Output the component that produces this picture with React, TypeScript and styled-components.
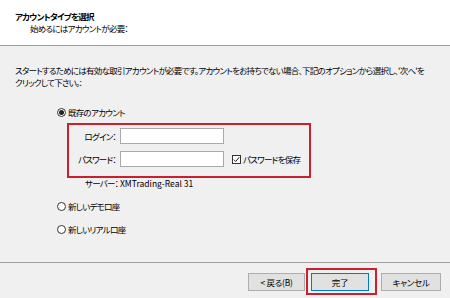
import React from 'react'
import styled, { createGlobalStyle } from 'styled-components'

const GlobalStyle = createGlobalStyle`
  body {
    margin: 0;
    font-family: "Noto Sans CJK JP", "Noto Sans", sans-serif;
    font-feature-settings: "palt";
    color: #000;
  }
`

const Window = styled.div`
  width: 450px;
  height: 298px;
  background: #f0f0f0;
  display: flex;
  flex-direction: column;
  font-size: 8.5px;
  line-height: 12px;
  letter-spacing: -0.75px;
  white-space: nowrap;
`

const Header = styled.div`
  height: 46px;
  box-sizing: border-box;
  background: #fff;
  border-bottom: 1px solid #a0a0a0;
  padding: 10px 0 0 15px;
`

const Title = styled.div`
  font-weight: bold;
`

const Subtitle = styled.div`
  padding-left: 15px;
`

const Body = styled.div`
  flex: 1;
  padding: 0 15px;
`

const Intro = styled.p`
  margin: 18px 0 0;
`

const Options = styled.div`
  margin-top: 18px;
  padding-left: 42px;
  display: flex;
  flex-direction: column;
`

const RadioRow = styled.label<{ $gap?: number }>`
  display: flex;
  align-items: center;
  gap: 2px;
  height: 12px;
  margin-top: ${(p) => p.$gap ?? 0}px;
`

const RadioCircle = styled.span<{ $checked?: boolean }>`
  width: 9px;
  height: 9px;
  box-sizing: border-box;
  border: 1px solid #333;
  border-radius: 50%;
  background: #fff;
  display: flex;
  align-items: center;
  justify-content: center;
  &::after {
    content: '';
    width: 5px;
    height: 5px;
    border-radius: 50%;
    background: ${(p) => (p.$checked ? '#222' : 'transparent')};
  }
`

const Highlight = styled.div`
  margin: 5px 0 0 10px;
  width: 244px;
  height: 55px;
  box-sizing: border-box;
  border: 2px solid #c8202f;
  padding-top: 3px;
  display: grid;
  grid-template-columns: 47px 104px auto;
  grid-auto-rows: 16px;
  column-gap: 4px;
  row-gap: 7px;
  align-items: center;
`

const FieldLabel = styled.span`
  text-align: right;
`

const TextBox = styled.div`
  height: 16px;
  box-sizing: border-box;
  background: #fff;
  border: 1px solid #a9a9a9;
`

const CheckRow = styled.label`
  display: flex;
  align-items: center;
  gap: 2px;
  margin-left: 4px;
`

const CheckBox = styled.span`
  width: 9px;
  height: 9px;
  box-sizing: border-box;
  border: 1px solid #333;
  background: #fff;
  display: flex;
  align-items: center;
  justify-content: center;
`

const ServerRow = styled.div`
  display: flex;
  padding-left: 28px;
  height: 10px;
  line-height: 10px;
`

const ServerLabel = styled.span`
  width: 35px;
`

const ServerName = styled.span`
  letter-spacing: 0;
`

const Footer = styled.div`
  height: 36px;
  box-sizing: border-box;
  border-top: 1px solid #a0a0a0;
  padding: 5px 9px 0 0;
  display: flex;
  justify-content: flex-end;
  align-items: flex-start;
`

const ButtonRow = styled.div`
  display: flex;
  align-items: center;
  height: 27px;
`

const Button = styled.button<{ $width: number; $default?: boolean }>`
  width: ${(p) => p.$width}px;
  height: 18px;
  box-sizing: border-box;
  padding: 0;
  font: inherit;
  font-size: 8.5px;
  letter-spacing: -0.3px;
  color: #000;
  background: #e1e1e1;
  border: 1px solid ${(p) => (p.$default ? '#0078d7' : '#adadad')};
`

const Marked = styled.span`
  display: flex;
  border: 2px solid #c8202f;
  padding: 3px 6px 2px 3px;
  margin: 0 4px 0 1px;
`

const Check = () => (
  <svg width="7" height="7" viewBox="0 0 7 7">
    <path d="M0.8 3.6 L2.7 5.5 L6.3 1.2" fill="none" stroke="#222" strokeWidth="1" />
  </svg>
)

export default function App() {
  return (
    <Window>
      <GlobalStyle />
      <Header>
        <Title>アカウントタイプを選択</Title>
        <Subtitle>始めるにはアカウントが必要：</Subtitle>
      </Header>
      <Body>
        <Intro>
          スタートするためには有効な取引アカウントが必要です。アカウントをお持ちでない場合、下記のオプションから選択し、'次へ'を
          <br />
          クリックして下さい。:
        </Intro>
        <Options>
          <RadioRow>
            <RadioCircle $checked />
            既存のアカウント
          </RadioRow>
          <Highlight>
            <FieldLabel>ログイン：</FieldLabel>
            <TextBox />
            <span />
            <FieldLabel>パスワード：</FieldLabel>
            <TextBox />
            <CheckRow>
              <CheckBox>
                <Check />
              </CheckBox>
              パスワードを保存
            </CheckRow>
          </Highlight>
          <ServerRow>
            <ServerLabel>サーバー：</ServerLabel>
            <ServerName>XMTrading-Real 31</ServerName>
          </ServerRow>
          <RadioRow $gap={12}>
            <RadioCircle />
            新しいデモ口座
          </RadioRow>
          <RadioRow $gap={11}>
            <RadioCircle />
            新しいリアル口座
          </RadioRow>
        </Options>
      </Body>
      <Footer>
        <ButtonRow>
          <Button $width={57}>&lt; 戻る(B)</Button>
          <Marked>
            <Button $width={58} $default>
              完了
            </Button>
          </Marked>
          <Button $width={60}>キャンセル</Button>
        </ButtonRow>
      </Footer>
    </Window>
  )
}
